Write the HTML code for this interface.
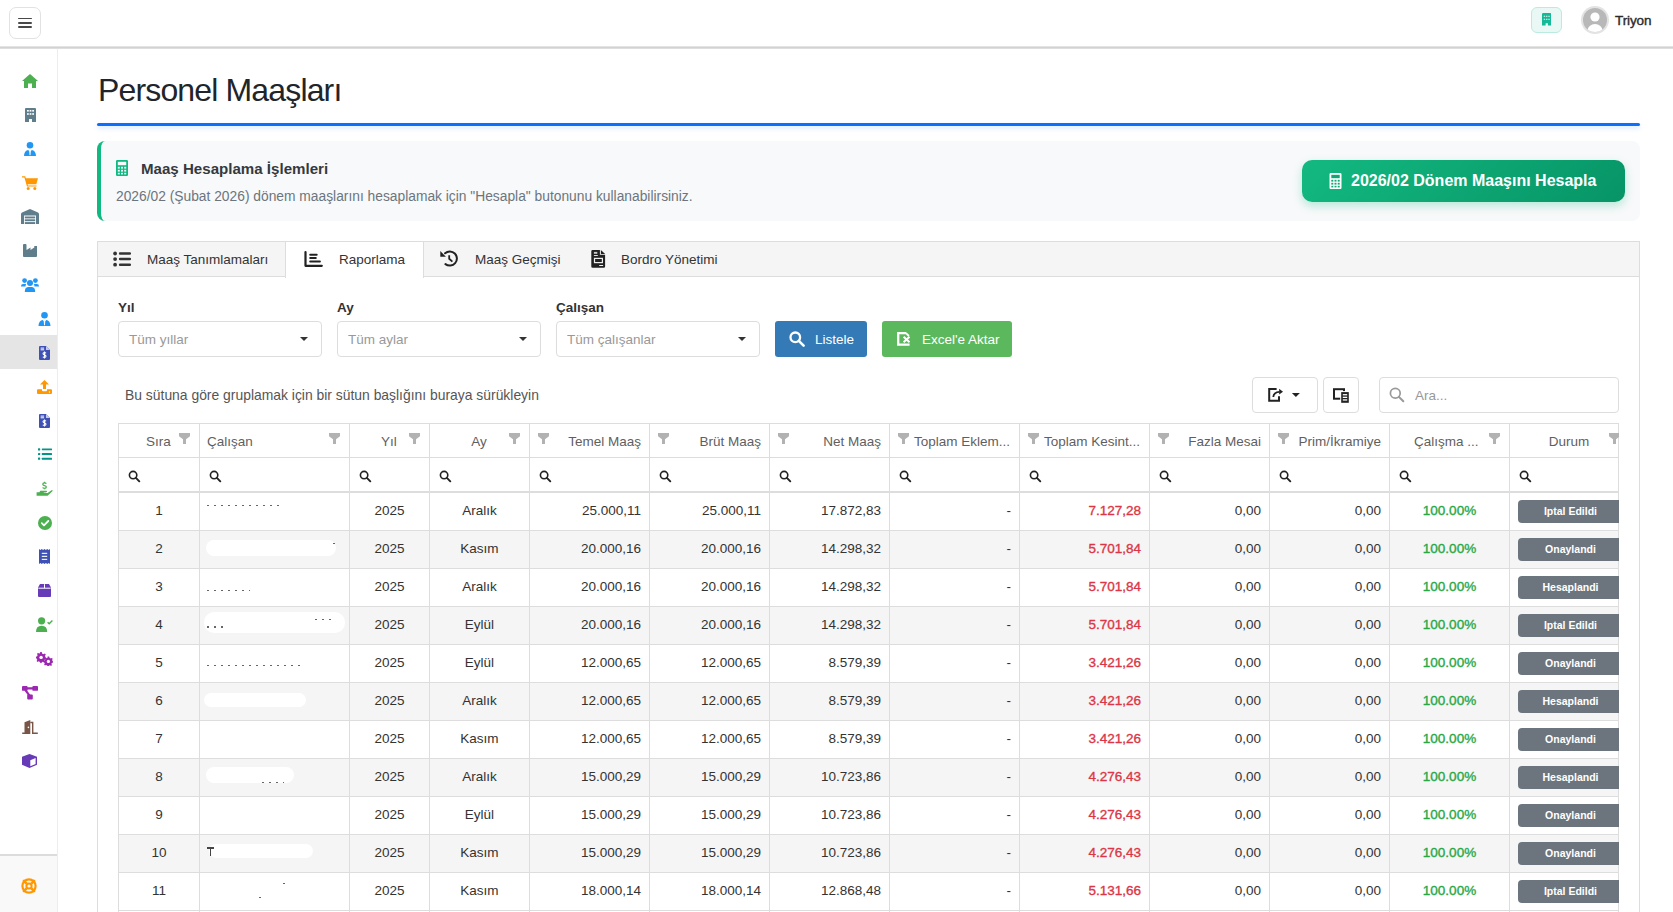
<!DOCTYPE html>
<html><head><meta charset="utf-8">
<style>
*{box-sizing:border-box;margin:0;padding:0}
html,body{width:1673px;height:912px;overflow:hidden;background:#fff;font-family:"Liberation Sans",sans-serif;color:#333}
svg{display:block}
.ab{position:absolute}
#nav{position:absolute;left:0;top:0;width:1673px;height:46px;background:#fff}
#navline{position:absolute;left:0;top:46px;width:1673px;height:3px;background:linear-gradient(#ececec,#cfcfcf 55%,#e8e8e8)}
#hamb{position:absolute;left:9px;top:7px;width:32px;height:32px;border:1px solid #e2e2e2;border-radius:7px;background:#fff}
#hamb i{position:absolute;left:8px;width:14.3px;height:1.7px;background:#484848;border-radius:1px}
#bldg{position:absolute;left:1531px;top:7px;width:31px;height:26px;border:1px solid #b9ecdf;border-radius:6px;background:#e9f8f4}
#avatar{position:absolute;left:1581px;top:6px;width:28px;height:28px;border-radius:50%;background:#e3e3e3}
#uname{position:absolute;left:1615px;top:12.5px;font-size:13.5px;font-weight:normal;color:#2b2b2b;-webkit-text-stroke:0.4px #2b2b2b;letter-spacing:-0.1px}
#side{position:absolute;left:0;top:49px;width:58px;height:863px;background:#fff;border-right:1px solid #ededed}
#sideact{position:absolute;left:0;top:335px;width:57px;height:34px;background:#e5e5e5}
#sidebot{position:absolute;left:0;top:854px;width:57px;height:58px;background:#f9f9f9;border-top:2px solid #dcdcdc}
.si{position:absolute}
#title{position:absolute;left:98px;top:72px;font-size:32px;color:#212529;white-space:nowrap;letter-spacing:-0.85px}
#bline{position:absolute;left:97px;top:123px;width:1543px;height:3px;background:#0d6efd;border-radius:2px;box-shadow:0 2px 5px rgba(13,110,253,.2)}
#card{position:absolute;left:97px;top:141px;width:1543px;height:80px;background:#f8f9fa;border-radius:8px;border-left:4px solid #10b981}
#card .lb{display:none}
#card .t{position:absolute;left:40px;top:19px;font-size:15.1px;font-weight:bold;color:#343a40;white-space:nowrap}
#card .s{position:absolute;left:15px;top:48px;font-size:13.8px;color:#6c757d;white-space:nowrap}
#gbtn{position:absolute;left:1302px;top:160px;width:323px;height:42px;border-radius:10px;background:linear-gradient(135deg,#13b981,#079466);color:#fff;box-shadow:0 4px 10px rgba(16,185,129,.28)}
#gbtn span{position:absolute;left:49px;top:12px;font-weight:bold;font-size:16px;white-space:nowrap}
#panel{position:absolute;left:97px;top:241px;width:1543px;height:680px;border:1px solid #ddd;background:#fff}
#tabs{position:absolute;left:0;top:0;width:1541px;height:35px;background:#f5f5f5;border-bottom:1px solid #ddd}
#acttab{position:absolute;left:187px;top:0;width:139px;height:36px;background:#fff;border-left:1px solid #ddd;border-right:1px solid #ddd}
.tt{position:absolute;top:252px;font-size:13.5px;color:#333;white-space:nowrap}
.lbl{position:absolute;top:300px;font-size:13.5px;font-weight:bold;color:#333}
.sel{position:absolute;top:321px;width:204px;height:36px;border:1px solid #ddd;border-radius:4px;background:#fff;font-size:13.5px;color:#999}
.sel span{position:absolute;left:10px;top:10px;white-space:nowrap}
.sel b{position:absolute;left:181px;top:15px;width:0;height:0;border-left:4px solid transparent;border-right:4px solid transparent;border-top:4px solid #333}
.btn{position:absolute;top:321px;height:36px;border-radius:3px;color:#fff;font-size:13.5px;white-space:nowrap}
.btn span{position:absolute;top:11px}
#grp{position:absolute;left:125px;top:387px;font-size:13.9px;color:#555;white-space:nowrap}
.tb{position:absolute;top:377px;height:36px;border:1px solid #ddd;border-radius:4px;background:#fff}
#search{position:absolute;left:1379px;top:377px;width:240px;height:36px;border:1px solid #ddd;border-radius:4px;background:#fff}
#search span{position:absolute;left:35px;top:10px;font-size:13.5px;color:#999}
#grid{position:absolute;left:118px;top:423px;width:1501px;height:489px;overflow:hidden;font-size:13.5px;color:#333}
#grid div{position:absolute}
.hl{left:0;width:1501px;height:1px;background:#ddd}
.vl{top:0;width:1px;height:489px;background:#ddd}
.dr{left:0;width:1501px;height:38px}
.hc{top:1px;height:33px}
.ht{top:10.5px;white-space:nowrap;color:#5f5f5f}
.fc{top:35px;height:33px}
.fc svg{position:absolute;left:9px;top:12px}
.dc{height:37px;line-height:35px;white-space:nowrap;overflow:hidden}
.ac{text-align:center}
.ar{text-align:right;padding-right:8px}
.red{color:#dc3545;-webkit-text-stroke:0.35px #dc3545}
.grn{color:#28a745;-webkit-text-stroke:0.35px #28a745}
.badge{position:absolute;left:8px;top:7px;width:105px;height:23px;border-radius:4px;background:#6c757d;color:#fff;font-weight:bold;font-size:10.5px;line-height:23px;text-align:center}
.fi{position:absolute}
</style></head><body>

<div id="nav">
  <div id="hamb"><i style="top:9.7px"></i><i style="top:14.2px"></i><i style="top:18.3px"></i></div>
  <div id="bldg"><svg class="ab" style="left:9.7px;top:5.3px" width="9.5" height="12.6" viewBox="0 0 9.5 12.6"><path d="M1.3 0H8.2A1.3 1.3 0 0 1 9.5 1.3V12.6H5.9V10.2H3.6V12.6H0V1.3A1.3 1.3 0 0 1 1.3 0Z" fill="#17b897"/><g fill="#e9f8f4"><rect x="1.7" y="2.7" width="1.5" height="1.1" rx=".4"/><rect x="4" y="2.7" width="1.5" height="1.1" rx=".4"/><rect x="6.3" y="2.7" width="1.5" height="1.1" rx=".4"/><rect x="1.7" y="5.7" width="1.5" height="1.1" rx=".4"/><rect x="4" y="5.7" width="1.5" height="1.1" rx=".4"/><rect x="6.3" y="5.7" width="1.5" height="1.1" rx=".4"/></g></svg></div>
  <div id="avatar"><svg class="ab" style="left:2px;top:2px" width="24" height="24" viewBox="0 0 24 24"><defs><clipPath id="avc"><circle cx="12" cy="12" r="12"/></clipPath></defs><circle cx="12" cy="12" r="12" fill="#b8b8b8"/><g clip-path="url(#avc)" fill="#fff"><circle cx="12" cy="9" r="4.6"/><ellipse cx="12" cy="22.5" rx="7.5" ry="6.5"/></g></svg></div>
  <div id="uname">Triyon</div>
</div>
<div id="navline"></div>
<div id="side">
  <div id="sideact" style="top:286px"></div>
  <div id="sidebot" style="top:805px"></div>
</div>
<!-- sidebar icons (absolute to page) -->
<svg class="si" style="left:22px;top:74px" width="16" height="14" viewBox="0 0 16 14"><path d="M8 0L16 7H14V14H10V9.5H6V14H2V7H0Z" fill="#4caf50"/></svg>
<svg class="si" style="left:25px;top:108px" width="11" height="14" viewBox="0 0 11 14"><path d="M1 0H10A1 1 0 0 1 11 1V14H7V11H4V14H0V1A1 1 0 0 1 1 0Z" fill="#607d8b"/><g fill="#fff"><rect x="2" y="2" width="1.8" height="1.6"/><rect x="4.6" y="2" width="1.8" height="1.6"/><rect x="7.2" y="2" width="1.8" height="1.6"/><rect x="2" y="5.2" width="1.8" height="1.6"/><rect x="4.6" y="5.2" width="1.8" height="1.6"/><rect x="7.2" y="5.2" width="1.8" height="1.6"/></g></svg>
<svg class="si" style="left:24px;top:142px" width="12" height="14" viewBox="0 0 12 14"><circle cx="6" cy="3.3" r="3.3" fill="#2196f3"/><path d="M0 14C0 10.5 1.8 8.3 4.3 8L6 10.5L7.7 8C10.2 8.3 12 10.5 12 14Z" fill="#2196f3"/><path d="M5.3 9.6H6.7L6.5 13.2H5.5Z" fill="#fff"/></svg>
<svg class="si" style="left:22px;top:176px" width="16" height="14" viewBox="0 0 16 14"><path d="M0 0.3H3.2L3.9 2.2H16L14.3 8.2H5.6L6 9.4H14.5V10.6H5L2.4 1.6H0Z" fill="#ff9800"/><circle cx="6.2" cy="12.5" r="1.5" fill="#ff9800"/><circle cx="12.8" cy="12.5" r="1.5" fill="#ff9800"/><path d="M5 3.6H14.3L13.4 6.8H5.9Z" fill="#fff" opacity="0"/></svg>
<svg class="si" style="left:21px;top:209px" width="18" height="15" viewBox="0 0 18 15"><path d="M0 5Q0 4 1 3.5L9 0L17 3.5Q18 4 18 5V15H15V6.5H3V15H0Z" fill="#607d8b"/><rect x="3.8" y="7.5" width="10.4" height="1.9" fill="#607d8b"/><rect x="3.8" y="10.3" width="10.4" height="1.9" fill="#607d8b"/><rect x="3.8" y="13.1" width="10.4" height="1.9" fill="#607d8b"/></svg>
<svg class="si" style="left:23px;top:244px" width="14" height="13" viewBox="0 0 14 13"><path d="M0 1A1 1 0 0 1 1 0H2.5A1 1 0 0 1 3.5 1V6L7.5 3.5V6L11.3 3.5V2H14V12A1 1 0 0 1 13 13H1A1 1 0 0 1 0 12Z" fill="#607d8b"/></svg>
<svg class="si" style="left:21px;top:278px" width="18" height="14" viewBox="0 0 18 14"><circle cx="3.6" cy="2.6" r="2.4" fill="#2196f3"/><circle cx="14.4" cy="2.6" r="2.4" fill="#2196f3"/><circle cx="9" cy="5" r="3" fill="#2196f3"/><path d="M0 8.2Q0 6 2.2 6H5.2Q4.5 7 4.5 8.6H0Z" fill="#2196f3"/><path d="M18 8.2Q18 6 15.8 6H12.8Q13.5 7 13.5 8.6H18Z" fill="#2196f3"/><path d="M3.8 14Q3.8 9.2 7 9H11Q14.2 9.2 14.2 14Z" fill="#2196f3"/></svg>
<svg class="si" style="left:38px;top:312px" width="13" height="14" viewBox="0 0 12 14"><circle cx="6" cy="3.3" r="3.3" fill="#2196f3"/><path d="M0 14C0 10.5 1.8 8.3 4.3 8L6 10.5L7.7 8C10.2 8.3 12 10.5 12 14Z" fill="#2196f3"/><path d="M5.3 9.6H6.7L6.5 13.2H5.5Z" fill="#fff"/></svg>
<svg class="si" style="left:39px;top:346px" width="11" height="14" viewBox="0 0 11 14"><path d="M1 0H7L11 4V13A1 1 0 0 1 10 14H1A1 1 0 0 1 0 13V1A1 1 0 0 1 1 0Z" fill="#3f51b5"/><path d="M7 0V4H11Z" fill="#c5cae9"/><rect x="1.6" y="1.6" width="3.5" height="1" fill="#fff"/><rect x="1.6" y="3.3" width="3.5" height="1" fill="#fff"/><path d="M5.5 5.6V12.6M7 7.2Q6.6 6.5 5.5 6.5Q4 6.5 4 7.6Q4 8.6 5.5 8.9Q7 9.2 7 10.3Q7 11.5 5.5 11.5Q4.3 11.5 3.9 10.7" stroke="#fff" stroke-width="1.1" fill="none"/></svg>
<svg class="si" style="left:37px;top:380px" width="15" height="14" viewBox="0 0 15 14"><path d="M7.5 0L12 4.6H9V9H6V4.6H3Z" fill="#ff9800"/><path d="M0 10.2A1 1 0 0 1 1 9.2H5V10.2A1 1 0 0 0 6 11.2H9A1 1 0 0 0 10 10.2V9.2H14A1 1 0 0 1 15 10.2V13A1 1 0 0 1 14 14H1A1 1 0 0 1 0 13Z" fill="#ff9800"/><circle cx="12.5" cy="12" r="0.7" fill="#fff"/></svg>
<svg class="si" style="left:39px;top:414px" width="11" height="14" viewBox="0 0 11 14"><path d="M1 0H7L11 4V13A1 1 0 0 1 10 14H1A1 1 0 0 1 0 13V1A1 1 0 0 1 1 0Z" fill="#3f51b5"/><path d="M7 0V4H11Z" fill="#c5cae9"/><rect x="1.6" y="1.6" width="3.5" height="1" fill="#fff"/><rect x="1.6" y="3.3" width="3.5" height="1" fill="#fff"/><path d="M5.5 5.6V12.6M7 7.2Q6.6 6.5 5.5 6.5Q4 6.5 4 7.6Q4 8.6 5.5 8.9Q7 9.2 7 10.3Q7 11.5 5.5 11.5Q4.3 11.5 3.9 10.7" stroke="#fff" stroke-width="1.1" fill="none"/></svg>
<svg class="si" style="left:38px;top:448px" width="14" height="12" viewBox="0 0 14 12"><g fill="#009688"><rect x="0" y="0.2" width="2.2" height="2.2" rx="0.5"/><rect x="0" y="4.9" width="2.2" height="2.2" rx="0.5"/><rect x="0" y="9.6" width="2.2" height="2.2" rx="0.5"/><rect x="3.8" y="0.4" width="10.2" height="1.9" rx="0.5"/><rect x="3.8" y="5.1" width="10.2" height="1.9" rx="0.5"/><rect x="3.8" y="9.8" width="10.2" height="1.9" rx="0.5"/></g></svg>
<svg class="si" style="left:32px;top:478px" width="26" height="22" viewBox="0 0 26 22"><path d="M14.4 5.6Q13.8 4.9 12.5 4.9Q10.8 4.9 10.8 6.3Q10.8 7.3 12.5 7.6Q14.3 7.9 14.3 9.1Q14.3 10.3 12.5 10.3Q11.1 10.3 10.6 9.5M12.5 3.8V4.9M12.5 10.3V11.2" stroke="#4caf50" stroke-width="1.3" fill="none"/><path d="M4.6 14.2H7.4L8.3 12.7H14.3Q15.3 12.8 15 13.7Q14.6 14.5 13.2 14.5H11.6L11.9 15.1H15.6L19.5 12.2Q20.6 11.9 20.9 12.8L15.6 17.8H4.6Z" fill="#4caf50"/></svg>
<svg class="si" style="left:38px;top:516px" width="14" height="14" viewBox="0 0 14 14"><circle cx="7" cy="7" r="7" fill="#4caf50"/><path d="M3.8 7.2L6 9.3L10.3 5" stroke="#fff" stroke-width="1.8" fill="none" stroke-linecap="round" stroke-linejoin="round"/></svg>
<svg class="si" style="left:39px;top:549px" width="11" height="15" viewBox="0 0 11 15"><path d="M0 0L1.4 0.9L2.75 0L4.1 0.9L5.5 0L6.9 0.9L8.25 0L9.6 0.9L11 0V15L9.6 14.1L8.25 15L6.9 14.1L5.5 15L4.1 14.1L2.75 15L1.4 14.1L0 15Z" fill="#3f51b5"/><rect x="2.8" y="3.8" width="5.4" height="1.1" fill="#fff"/><rect x="2.8" y="6.8" width="5.4" height="1.1" fill="#fff"/><rect x="2.8" y="9.8" width="5.4" height="1.1" fill="#fff"/></svg>
<svg class="si" style="left:38px;top:584px" width="13" height="13" viewBox="0 0 13 13"><path d="M2 0H11L13 3.6V12A1 1 0 0 1 12 13H1A1 1 0 0 1 0 12V3.6Z" fill="#673ab7"/><path d="M0.3 4.2H12.7M6.5 0.2V4.2" stroke="#fff" stroke-width="1"/></svg>
<svg class="si" style="left:36px;top:617px" width="17" height="15" viewBox="0 0 17 15"><circle cx="5.6" cy="3.8" r="3.6" fill="#4caf50"/><path d="M0 15Q0 8.8 5.6 8.8Q11.2 8.8 11.2 15Z" fill="#4caf50"/><path d="M11.6 5.2L13.2 6.8L16.4 3.6" stroke="#4caf50" stroke-width="1.4" fill="none"/></svg>
<svg class="si" style="left:36px;top:652px" width="17" height="14" viewBox="0 0 17 14"><g fill="#9c27b0"><circle cx="5" cy="5" r="3.2"/><path d="M4.2 0H5.8L6 1.4L7.6 2.2L8.8 1.5L9.8 2.5L9 3.7L9.6 5.5L10.2 5.8V7L9 7.3L8.5 8.4L9.1 9.6L8 10.5L6.9 9.8L5.8 10.2L5.5 11H4.3L4 9.9L2.6 9.3L1.6 10L0.6 9L1.3 8L0.6 6.6L0 6.3V4.8L1.2 4.3L1.6 2.9L1 1.8L2 1L3.2 1.6L4 1.2Z"/><circle cx="12.4" cy="9.2" r="3"/><path d="M11.6 4.6H13.2L13.5 5.8L14.8 6.5L15.8 5.9L16.7 6.8L16.1 7.9L16.6 9L17 9.4V10.6L15.9 10.9L15.4 12L16 13L15 13.9L14 13.3L12.9 13.7L12.6 14.5H11.4L11.2 13.5L10 13L9 13.6L8.1 12.7L8.7 11.7L8.2 10.6L7.8 10.3V9L8.9 8.6L9.3 7.6L8.8 6.6L9.7 5.8L10.7 6.3L11.4 5.9Z"/></g><circle cx="5.1" cy="5.4" r="1.7" fill="#fff"/><circle cx="12.4" cy="9.4" r="1.6" fill="#fff"/></svg>
<svg class="si" style="left:22px;top:686px" width="16" height="14" viewBox="0 0 16 14"><path d="M4 2.4H12M3.2 3.8L7.6 9.6" stroke="#9c27b0" stroke-width="2.2" fill="none"/><g fill="#9c27b0"><rect x="0" y="0" width="5.6" height="4.8" rx="0.9"/><rect x="10.4" y="0" width="5.6" height="4.8" rx="0.9"/><rect x="5.2" y="8.6" width="5.6" height="4.8" rx="0.9"/></g></svg>
<svg class="si" style="left:22px;top:720px" width="16" height="14" viewBox="0 0 16 14"><path d="M2.5 12.5V2.2L8.3 0V14H0.2V12.5Z" fill="#795548"/><path d="M8.3 1.8H11.4V12.6H15.8V14H10V3.2H8.3Z" fill="#795548"/><circle cx="6.4" cy="7.4" r="0.8" fill="#fff"/></svg>
<svg class="si" style="left:22px;top:754px" width="15" height="14" viewBox="0 0 15 14"><path d="M7.5 0L15 2.8V10.8L7.5 14L0 10.8V2.8Z" fill="#673ab7"/><path d="M8.3 6.2L13.6 4V10L8.3 12.3Z" fill="#fff"/></svg>
<svg class="si" style="left:21px;top:878px" width="16" height="16" viewBox="0 0 16 16"><circle cx="8" cy="8" r="6.6" fill="none" stroke="#ff9800" stroke-width="2.2"/><circle cx="8" cy="8" r="2.6" fill="none" stroke="#ff9800" stroke-width="2"/><path d="M2.2 2.2L5.6 5.6M13.8 2.2L10.4 5.6M2.2 13.8L5.6 10.4M13.8 13.8L10.4 10.4" stroke="#ff9800" stroke-width="2.6"/></svg>

<div id="title">Personel Maaşları</div>
<div id="bline"></div>
<div id="card">
  <div class="lb"></div>
  <svg class="ab" style="left:15px;top:19px" width="12" height="16" viewBox="0 0 12 16"><path d="M1.2 0H10.8A1.2 1.2 0 0 1 12 1.2V14.8A1.2 1.2 0 0 1 10.8 16H1.2A1.2 1.2 0 0 1 0 14.8V1.2A1.2 1.2 0 0 1 1.2 0Z" fill="#10b981"/><g fill="#f8f9fa"><rect x="1.8" y="1.8" width="8.4" height="3.4"/><rect x="1.8" y="6.8" width="2" height="1.8"/><rect x="5" y="6.8" width="2" height="1.8"/><rect x="8.2" y="6.8" width="2" height="1.8"/><rect x="1.8" y="9.8" width="2" height="1.8"/><rect x="5" y="9.8" width="2" height="1.8"/><rect x="8.2" y="9.8" width="2" height="1.8"/><rect x="1.8" y="12.8" width="2" height="1.6"/><rect x="5" y="12.8" width="2" height="1.6"/><rect x="8.2" y="12.8" width="2" height="1.6"/></g></svg>
  <div class="t">Maaş Hesaplama İşlemleri</div>
  <div class="s">2026/02 (Şubat 2026) dönem maaşlarını hesaplamak için "Hesapla" butonunu kullanabilirsiniz.</div>
</div>
<div id="gbtn">
  <svg class="ab" style="left:27px;top:13px" width="13" height="16" viewBox="0 0 12 16"><path d="M1.2 0H10.8A1.2 1.2 0 0 1 12 1.2V14.8A1.2 1.2 0 0 1 10.8 16H1.2A1.2 1.2 0 0 1 0 14.8V1.2A1.2 1.2 0 0 1 1.2 0Z" fill="#fff"/><g fill="#10a676"><rect x="1.8" y="1.8" width="8.4" height="3.4"/><rect x="1.8" y="6.8" width="2" height="1.8"/><rect x="5" y="6.8" width="2" height="1.8"/><rect x="8.2" y="6.8" width="2" height="1.8"/><rect x="1.8" y="9.8" width="2" height="1.8"/><rect x="5" y="9.8" width="2" height="1.8"/><rect x="8.2" y="9.8" width="2" height="1.8"/><rect x="1.8" y="12.8" width="2" height="1.6"/><rect x="5" y="12.8" width="2" height="1.6"/><rect x="8.2" y="12.8" width="2" height="1.6"/></g></svg>
  <span>2026/02 Dönem Maaşını Hesapla</span>
</div>
<div id="panel">
  <div id="tabs"></div>
  <div id="acttab"></div>
</div>
<!-- tabs content -->
<svg class="ab" style="left:106px;top:244px" width="30" height="30" viewBox="0 0 30 30"><g fill="#333"><circle cx="9.1" cy="9.5" r="1.9"/><circle cx="9.1" cy="15.1" r="1.9"/><circle cx="9.1" cy="20.7" r="1.9"/></g><path d="M14.1 9.5H23.8M14.1 15.1H23.8M14.1 20.7H23.8" stroke="#333" stroke-width="2.5" stroke-linecap="round"/></svg>
<div class="tt" style="left:147px">Maaş Tanımlamaları</div>
<svg class="ab" style="left:298px;top:244px" width="32" height="30" viewBox="0 0 32 30"><path d="M7.5 8V21.8H23.8" stroke="#222" stroke-width="2.2" fill="none" stroke-linecap="round" stroke-linejoin="round"/><path d="M12.2 10.7H18.7M12.2 14H17.8M12.2 17.4H21.9" stroke="#222" stroke-width="2" stroke-linecap="round"/></svg>
<div class="tt" style="left:339px">Raporlama</div>
<svg class="ab" style="left:436px;top:244px" width="30" height="30" viewBox="0 0 30 30"><path d="M9.07 9.21A7.1 7.1 0 1 1 9.46 20.12" stroke="#222" stroke-width="2" fill="none" stroke-linecap="round"/><path d="M4.3 6.9V12.8H9.9Z" fill="#222"/><path d="M13.2 11.2V14.8L16.4 17.6" stroke="#222" stroke-width="1.8" fill="none"/></svg>
<div class="tt" style="left:475px">Maaş Geçmişi</div>
<svg class="ab" style="left:586px;top:244px" width="30" height="30" viewBox="0 0 30 30"><path d="M6.6 5.9H13.9V10.8H19.1V22.5A1.3 1.3 0 0 1 17.8 23.8H6.6A1.3 1.3 0 0 1 5.3 22.5V7.2A1.3 1.3 0 0 1 6.6 5.9Z" fill="#222"/><path d="M14.9 6.1L19.1 10H14.9Z" fill="#222"/><g fill="#f5f5f5"><rect x="7.9" y="7.9" width="3.4" height="1.9" opacity=".8"/><rect x="7.9" y="11" width="3.9" height="0.9"/><rect x="7.9" y="21" width="0" height="0"/><rect x="13.2" y="21" width="3.9" height="1"/></g><rect x="8.5" y="14.4" width="7.9" height="4.2" fill="none" stroke="#eee" stroke-width="1.2"/></svg>
<div class="tt" style="left:621px">Bordro Yönetimi</div>

<div class="lbl" style="left:118px">Yıl</div>
<div class="lbl" style="left:337px">Ay</div>
<div class="lbl" style="left:556px">Çalışan</div>
<div class="sel" style="left:118px"><span>Tüm yıllar</span><b></b></div>
<div class="sel" style="left:337px"><span>Tüm aylar</span><b></b></div>
<div class="sel" style="left:556px"><span>Tüm çalışanlar</span><b></b></div>
<div class="btn" style="left:775px;width:92px;background:#337ab7">
  <svg class="ab" style="left:14px;top:10px" width="16" height="16" viewBox="0 0 16 16"><circle cx="6.3" cy="6.3" r="4.8" stroke="#fff" stroke-width="2.3" fill="none"/><path d="M9.8 9.8L14.6 14.6" stroke="#fff" stroke-width="2.6" stroke-linecap="round"/></svg>
  <span style="left:40px">Listele</span>
</div>
<div class="btn" style="left:882px;width:130px;background:#5cb85c">
  <svg class="ab" style="left:15px;top:11px" width="15" height="14" viewBox="0 0 15 14"><path d="M9.3 1.2H1.2V12.7H12.6" stroke="#fff" stroke-width="2.3" fill="none"/><path d="M9 1.1L11.9 4" stroke="#fff" stroke-width="1.9"/><path d="M6.6 4.8L12.5 10.3M12.5 4.8L6.6 10.3" stroke="#fff" stroke-width="2"/></svg>
  <span style="left:40px">Excel'e Aktar</span>
</div>
<div id="grp">Bu sütuna göre gruplamak için bir sütun başlığını buraya sürükleyin</div>
<div class="tb" style="left:1252px;width:66px">
  <svg class="ab" style="left:9px;top:4px" width="40" height="26" viewBox="0 0 40 26"><path d="M14.6 6.9H7.2V18.7H17V14.3" stroke="#222" stroke-width="2" fill="none"/><path d="M11.3 15Q11.6 10 17.6 9.8" stroke="#222" stroke-width="1.8" fill="none"/><path d="M17.2 6.8L21 9.7L17.2 12.6Z" fill="#222"/><path d="M29.9 11H37.9L33.9 15Z" fill="#222"/></svg>
</div>
<div class="tb" style="left:1323px;width:36px">
  <svg class="ab" style="left:-1px;top:-1px" width="36" height="36" viewBox="0 0 36 36"><rect x="11" y="12.2" width="10" height="9.5" fill="none" stroke="#222" stroke-width="2"/><rect x="17.2" y="14.1" width="9.6" height="12.7" fill="#fff"/><rect x="18.2" y="15.1" width="7.6" height="10.7" fill="#222"/><g fill="#fff"><rect x="19.8" y="17.1" width="4.4" height="1.3"/><rect x="19.8" y="19.7" width="4.4" height="1.3"/><rect x="19.8" y="22.3" width="4.4" height="1.3"/></g></svg>
</div>
<div id="search">
  <svg class="ab" style="left:9px;top:9px" width="16" height="16" viewBox="0 0 16 16"><circle cx="6.3" cy="6.3" r="4.9" stroke="#999" stroke-width="1.7" fill="none"/><path d="M9.9 9.9L14.3 14.3" stroke="#999" stroke-width="2" stroke-linecap="round"/></svg>
  <span>Ara...</span>
</div>

<div id="grid">
<div class="dr" style="top:107px;background:#f5f5f5"></div>
<div class="dr" style="top:183px;background:#f5f5f5"></div>
<div class="dr" style="top:259px;background:#f5f5f5"></div>
<div class="dr" style="top:335px;background:#f5f5f5"></div>
<div class="dr" style="top:411px;background:#f5f5f5"></div>
<div class="hl" style="top:0"></div>
<div class="hl" style="top:34px"></div>
<div class="hl" style="top:68px;height:2px"></div>
<div class="hl" style="top:107px"></div>
<div class="hl" style="top:145px"></div>
<div class="hl" style="top:183px"></div>
<div class="hl" style="top:221px"></div>
<div class="hl" style="top:259px"></div>
<div class="hl" style="top:297px"></div>
<div class="hl" style="top:335px"></div>
<div class="hl" style="top:373px"></div>
<div class="hl" style="top:411px"></div>
<div class="hl" style="top:449px"></div>
<div class="hl" style="top:487px"></div>
<div class="vl" style="left:0px"></div>
<div class="vl" style="left:81px"></div>
<div class="vl" style="left:231px"></div>
<div class="vl" style="left:311px"></div>
<div class="vl" style="left:411px"></div>
<div class="vl" style="left:531px"></div>
<div class="vl" style="left:651px"></div>
<div class="vl" style="left:771px"></div>
<div class="vl" style="left:901px"></div>
<div class="vl" style="left:1031px"></div>
<div class="vl" style="left:1151px"></div>
<div class="vl" style="left:1271px"></div>
<div class="vl" style="left:1391px"></div>
<div class="vl" style="left:1500px"></div>
<div style="left:61px;top:10px;width:11px;height:11px"><svg width="11" height="11" viewBox="0 0 11 11"><path d="M0 0H11V3.2L7 6.2V11H4V6.2L0 3.2Z" fill="#b2b2b2"/></svg></div>
<div class="ht" style="left:-59.5px;width:200px;text-align:center">Sıra</div>
<div class="fc" style="left:1px;width:80px"><svg class="mg" width="13" height="13" viewBox="0 0 13 13"><circle cx="5.1" cy="5.1" r="3.7" fill="none" stroke="#222" stroke-width="1.6"/><path d="M7.9 7.9L11.3 11.3" stroke="#222" stroke-width="1.9" stroke-linecap="round"/></svg></div>
<div style="left:211px;top:10px;width:11px;height:11px"><svg width="11" height="11" viewBox="0 0 11 11"><path d="M0 0H11V3.2L7 6.2V11H4V6.2L0 3.2Z" fill="#b2b2b2"/></svg></div>
<div class="ht" style="left:89px">Çalışan</div>
<div class="fc" style="left:82px;width:149px"><svg class="mg" width="13" height="13" viewBox="0 0 13 13"><circle cx="5.1" cy="5.1" r="3.7" fill="none" stroke="#222" stroke-width="1.6"/><path d="M7.9 7.9L11.3 11.3" stroke="#222" stroke-width="1.9" stroke-linecap="round"/></svg></div>
<div style="left:291px;top:10px;width:11px;height:11px"><svg width="11" height="11" viewBox="0 0 11 11"><path d="M0 0H11V3.2L7 6.2V11H4V6.2L0 3.2Z" fill="#b2b2b2"/></svg></div>
<div class="ht" style="left:171.0px;width:200px;text-align:center">Yıl</div>
<div class="fc" style="left:232px;width:79px"><svg class="mg" width="13" height="13" viewBox="0 0 13 13"><circle cx="5.1" cy="5.1" r="3.7" fill="none" stroke="#222" stroke-width="1.6"/><path d="M7.9 7.9L11.3 11.3" stroke="#222" stroke-width="1.9" stroke-linecap="round"/></svg></div>
<div style="left:391px;top:10px;width:11px;height:11px"><svg width="11" height="11" viewBox="0 0 11 11"><path d="M0 0H11V3.2L7 6.2V11H4V6.2L0 3.2Z" fill="#b2b2b2"/></svg></div>
<div class="ht" style="left:261.0px;width:200px;text-align:center">Ay</div>
<div class="fc" style="left:312px;width:99px"><svg class="mg" width="13" height="13" viewBox="0 0 13 13"><circle cx="5.1" cy="5.1" r="3.7" fill="none" stroke="#222" stroke-width="1.6"/><path d="M7.9 7.9L11.3 11.3" stroke="#222" stroke-width="1.9" stroke-linecap="round"/></svg></div>
<div style="left:420px;top:10px;width:11px;height:11px"><svg width="11" height="11" viewBox="0 0 11 11"><path d="M0 0H11V3.2L7 6.2V11H4V6.2L0 3.2Z" fill="#b2b2b2"/></svg></div>
<div class="ht" style="left:323px;width:200px;text-align:right">Temel Maaş</div>
<div class="fc" style="left:412px;width:119px"><svg class="mg" width="13" height="13" viewBox="0 0 13 13"><circle cx="5.1" cy="5.1" r="3.7" fill="none" stroke="#222" stroke-width="1.6"/><path d="M7.9 7.9L11.3 11.3" stroke="#222" stroke-width="1.9" stroke-linecap="round"/></svg></div>
<div style="left:540px;top:10px;width:11px;height:11px"><svg width="11" height="11" viewBox="0 0 11 11"><path d="M0 0H11V3.2L7 6.2V11H4V6.2L0 3.2Z" fill="#b2b2b2"/></svg></div>
<div class="ht" style="left:443px;width:200px;text-align:right">Brüt Maaş</div>
<div class="fc" style="left:532px;width:119px"><svg class="mg" width="13" height="13" viewBox="0 0 13 13"><circle cx="5.1" cy="5.1" r="3.7" fill="none" stroke="#222" stroke-width="1.6"/><path d="M7.9 7.9L11.3 11.3" stroke="#222" stroke-width="1.9" stroke-linecap="round"/></svg></div>
<div style="left:660px;top:10px;width:11px;height:11px"><svg width="11" height="11" viewBox="0 0 11 11"><path d="M0 0H11V3.2L7 6.2V11H4V6.2L0 3.2Z" fill="#b2b2b2"/></svg></div>
<div class="ht" style="left:563px;width:200px;text-align:right">Net Maaş</div>
<div class="fc" style="left:652px;width:119px"><svg class="mg" width="13" height="13" viewBox="0 0 13 13"><circle cx="5.1" cy="5.1" r="3.7" fill="none" stroke="#222" stroke-width="1.6"/><path d="M7.9 7.9L11.3 11.3" stroke="#222" stroke-width="1.9" stroke-linecap="round"/></svg></div>
<div style="left:780px;top:10px;width:11px;height:11px"><svg width="11" height="11" viewBox="0 0 11 11"><path d="M0 0H11V3.2L7 6.2V11H4V6.2L0 3.2Z" fill="#b2b2b2"/></svg></div>
<div class="ht" style="left:796px">Toplam Eklem...</div>
<div class="fc" style="left:772px;width:129px"><svg class="mg" width="13" height="13" viewBox="0 0 13 13"><circle cx="5.1" cy="5.1" r="3.7" fill="none" stroke="#222" stroke-width="1.6"/><path d="M7.9 7.9L11.3 11.3" stroke="#222" stroke-width="1.9" stroke-linecap="round"/></svg></div>
<div style="left:910px;top:10px;width:11px;height:11px"><svg width="11" height="11" viewBox="0 0 11 11"><path d="M0 0H11V3.2L7 6.2V11H4V6.2L0 3.2Z" fill="#b2b2b2"/></svg></div>
<div class="ht" style="left:926px">Toplam Kesint...</div>
<div class="fc" style="left:902px;width:129px"><svg class="mg" width="13" height="13" viewBox="0 0 13 13"><circle cx="5.1" cy="5.1" r="3.7" fill="none" stroke="#222" stroke-width="1.6"/><path d="M7.9 7.9L11.3 11.3" stroke="#222" stroke-width="1.9" stroke-linecap="round"/></svg></div>
<div style="left:1040px;top:10px;width:11px;height:11px"><svg width="11" height="11" viewBox="0 0 11 11"><path d="M0 0H11V3.2L7 6.2V11H4V6.2L0 3.2Z" fill="#b2b2b2"/></svg></div>
<div class="ht" style="left:943px;width:200px;text-align:right">Fazla Mesai</div>
<div class="fc" style="left:1032px;width:119px"><svg class="mg" width="13" height="13" viewBox="0 0 13 13"><circle cx="5.1" cy="5.1" r="3.7" fill="none" stroke="#222" stroke-width="1.6"/><path d="M7.9 7.9L11.3 11.3" stroke="#222" stroke-width="1.9" stroke-linecap="round"/></svg></div>
<div style="left:1160px;top:10px;width:11px;height:11px"><svg width="11" height="11" viewBox="0 0 11 11"><path d="M0 0H11V3.2L7 6.2V11H4V6.2L0 3.2Z" fill="#b2b2b2"/></svg></div>
<div class="ht" style="left:1063px;width:200px;text-align:right">Prim/İkramiye</div>
<div class="fc" style="left:1152px;width:119px"><svg class="mg" width="13" height="13" viewBox="0 0 13 13"><circle cx="5.1" cy="5.1" r="3.7" fill="none" stroke="#222" stroke-width="1.6"/><path d="M7.9 7.9L11.3 11.3" stroke="#222" stroke-width="1.9" stroke-linecap="round"/></svg></div>
<div style="left:1371px;top:10px;width:11px;height:11px"><svg width="11" height="11" viewBox="0 0 11 11"><path d="M0 0H11V3.2L7 6.2V11H4V6.2L0 3.2Z" fill="#b2b2b2"/></svg></div>
<div class="ht" style="left:1296px">Çalışma ...</div>
<div class="fc" style="left:1272px;width:119px"><svg class="mg" width="13" height="13" viewBox="0 0 13 13"><circle cx="5.1" cy="5.1" r="3.7" fill="none" stroke="#222" stroke-width="1.6"/><path d="M7.9 7.9L11.3 11.3" stroke="#222" stroke-width="1.9" stroke-linecap="round"/></svg></div>
<div style="left:1491px;top:10px;width:11px;height:11px"><svg width="11" height="11" viewBox="0 0 11 11"><path d="M0 0H11V3.2L7 6.2V11H4V6.2L0 3.2Z" fill="#b2b2b2"/></svg></div>
<div class="ht" style="left:1351.0px;width:200px;text-align:center">Durum</div>
<div class="fc" style="left:1392px;width:119px"><svg class="mg" width="13" height="13" viewBox="0 0 13 13"><circle cx="5.1" cy="5.1" r="3.7" fill="none" stroke="#222" stroke-width="1.6"/><path d="M7.9 7.9L11.3 11.3" stroke="#222" stroke-width="1.9" stroke-linecap="round"/></svg></div>
<div class="dc ac " style="left:1px;width:80px;top:70px">1</div>
<div class="dc ac " style="left:232px;width:79px;top:70px">2025</div>
<div class="dc ac " style="left:312px;width:99px;top:70px">Aralık</div>
<div class="dc ar " style="left:412px;width:119px;top:70px">25.000,11</div>
<div class="dc ar " style="left:532px;width:119px;top:70px">25.000,11</div>
<div class="dc ar " style="left:652px;width:119px;top:70px">17.872,83</div>
<div class="dc ar " style="left:772px;width:129px;top:70px">-</div>
<div class="dc ar red" style="left:902px;width:129px;top:70px">7.127,28</div>
<div class="dc ar " style="left:1032px;width:119px;top:70px">0,00</div>
<div class="dc ar " style="left:1152px;width:119px;top:70px">0,00</div>
<div class="dc ac grn" style="left:1272px;width:119px;top:70px">100.00%</div>
<div class="dc" style="left:1392px;width:130px;top:70px"><span class="badge">Iptal Edildi</span></div>
<div class="dc ac " style="left:1px;width:80px;top:108px">2</div>
<div class="dc ac " style="left:232px;width:79px;top:108px">2025</div>
<div class="dc ac " style="left:312px;width:99px;top:108px">Kasım</div>
<div class="dc ar " style="left:412px;width:119px;top:108px">20.000,16</div>
<div class="dc ar " style="left:532px;width:119px;top:108px">20.000,16</div>
<div class="dc ar " style="left:652px;width:119px;top:108px">14.298,32</div>
<div class="dc ar " style="left:772px;width:129px;top:108px">-</div>
<div class="dc ar red" style="left:902px;width:129px;top:108px">5.701,84</div>
<div class="dc ar " style="left:1032px;width:119px;top:108px">0,00</div>
<div class="dc ar " style="left:1152px;width:119px;top:108px">0,00</div>
<div class="dc ac grn" style="left:1272px;width:119px;top:108px">100.00%</div>
<div class="dc" style="left:1392px;width:130px;top:108px"><span class="badge">Onaylandi</span></div>
<div class="dc ac " style="left:1px;width:80px;top:146px">3</div>
<div class="dc ac " style="left:232px;width:79px;top:146px">2025</div>
<div class="dc ac " style="left:312px;width:99px;top:146px">Aralık</div>
<div class="dc ar " style="left:412px;width:119px;top:146px">20.000,16</div>
<div class="dc ar " style="left:532px;width:119px;top:146px">20.000,16</div>
<div class="dc ar " style="left:652px;width:119px;top:146px">14.298,32</div>
<div class="dc ar " style="left:772px;width:129px;top:146px">-</div>
<div class="dc ar red" style="left:902px;width:129px;top:146px">5.701,84</div>
<div class="dc ar " style="left:1032px;width:119px;top:146px">0,00</div>
<div class="dc ar " style="left:1152px;width:119px;top:146px">0,00</div>
<div class="dc ac grn" style="left:1272px;width:119px;top:146px">100.00%</div>
<div class="dc" style="left:1392px;width:130px;top:146px"><span class="badge">Hesaplandi</span></div>
<div class="dc ac " style="left:1px;width:80px;top:184px">4</div>
<div class="dc ac " style="left:232px;width:79px;top:184px">2025</div>
<div class="dc ac " style="left:312px;width:99px;top:184px">Eylül</div>
<div class="dc ar " style="left:412px;width:119px;top:184px">20.000,16</div>
<div class="dc ar " style="left:532px;width:119px;top:184px">20.000,16</div>
<div class="dc ar " style="left:652px;width:119px;top:184px">14.298,32</div>
<div class="dc ar " style="left:772px;width:129px;top:184px">-</div>
<div class="dc ar red" style="left:902px;width:129px;top:184px">5.701,84</div>
<div class="dc ar " style="left:1032px;width:119px;top:184px">0,00</div>
<div class="dc ar " style="left:1152px;width:119px;top:184px">0,00</div>
<div class="dc ac grn" style="left:1272px;width:119px;top:184px">100.00%</div>
<div class="dc" style="left:1392px;width:130px;top:184px"><span class="badge">Iptal Edildi</span></div>
<div class="dc ac " style="left:1px;width:80px;top:222px">5</div>
<div class="dc ac " style="left:232px;width:79px;top:222px">2025</div>
<div class="dc ac " style="left:312px;width:99px;top:222px">Eylül</div>
<div class="dc ar " style="left:412px;width:119px;top:222px">12.000,65</div>
<div class="dc ar " style="left:532px;width:119px;top:222px">12.000,65</div>
<div class="dc ar " style="left:652px;width:119px;top:222px">8.579,39</div>
<div class="dc ar " style="left:772px;width:129px;top:222px">-</div>
<div class="dc ar red" style="left:902px;width:129px;top:222px">3.421,26</div>
<div class="dc ar " style="left:1032px;width:119px;top:222px">0,00</div>
<div class="dc ar " style="left:1152px;width:119px;top:222px">0,00</div>
<div class="dc ac grn" style="left:1272px;width:119px;top:222px">100.00%</div>
<div class="dc" style="left:1392px;width:130px;top:222px"><span class="badge">Onaylandi</span></div>
<div class="dc ac " style="left:1px;width:80px;top:260px">6</div>
<div class="dc ac " style="left:232px;width:79px;top:260px">2025</div>
<div class="dc ac " style="left:312px;width:99px;top:260px">Aralık</div>
<div class="dc ar " style="left:412px;width:119px;top:260px">12.000,65</div>
<div class="dc ar " style="left:532px;width:119px;top:260px">12.000,65</div>
<div class="dc ar " style="left:652px;width:119px;top:260px">8.579,39</div>
<div class="dc ar " style="left:772px;width:129px;top:260px">-</div>
<div class="dc ar red" style="left:902px;width:129px;top:260px">3.421,26</div>
<div class="dc ar " style="left:1032px;width:119px;top:260px">0,00</div>
<div class="dc ar " style="left:1152px;width:119px;top:260px">0,00</div>
<div class="dc ac grn" style="left:1272px;width:119px;top:260px">100.00%</div>
<div class="dc" style="left:1392px;width:130px;top:260px"><span class="badge">Hesaplandi</span></div>
<div class="dc ac " style="left:1px;width:80px;top:298px">7</div>
<div class="dc ac " style="left:232px;width:79px;top:298px">2025</div>
<div class="dc ac " style="left:312px;width:99px;top:298px">Kasım</div>
<div class="dc ar " style="left:412px;width:119px;top:298px">12.000,65</div>
<div class="dc ar " style="left:532px;width:119px;top:298px">12.000,65</div>
<div class="dc ar " style="left:652px;width:119px;top:298px">8.579,39</div>
<div class="dc ar " style="left:772px;width:129px;top:298px">-</div>
<div class="dc ar red" style="left:902px;width:129px;top:298px">3.421,26</div>
<div class="dc ar " style="left:1032px;width:119px;top:298px">0,00</div>
<div class="dc ar " style="left:1152px;width:119px;top:298px">0,00</div>
<div class="dc ac grn" style="left:1272px;width:119px;top:298px">100.00%</div>
<div class="dc" style="left:1392px;width:130px;top:298px"><span class="badge">Onaylandi</span></div>
<div class="dc ac " style="left:1px;width:80px;top:336px">8</div>
<div class="dc ac " style="left:232px;width:79px;top:336px">2025</div>
<div class="dc ac " style="left:312px;width:99px;top:336px">Aralık</div>
<div class="dc ar " style="left:412px;width:119px;top:336px">15.000,29</div>
<div class="dc ar " style="left:532px;width:119px;top:336px">15.000,29</div>
<div class="dc ar " style="left:652px;width:119px;top:336px">10.723,86</div>
<div class="dc ar " style="left:772px;width:129px;top:336px">-</div>
<div class="dc ar red" style="left:902px;width:129px;top:336px">4.276,43</div>
<div class="dc ar " style="left:1032px;width:119px;top:336px">0,00</div>
<div class="dc ar " style="left:1152px;width:119px;top:336px">0,00</div>
<div class="dc ac grn" style="left:1272px;width:119px;top:336px">100.00%</div>
<div class="dc" style="left:1392px;width:130px;top:336px"><span class="badge">Hesaplandi</span></div>
<div class="dc ac " style="left:1px;width:80px;top:374px">9</div>
<div class="dc ac " style="left:232px;width:79px;top:374px">2025</div>
<div class="dc ac " style="left:312px;width:99px;top:374px">Eylül</div>
<div class="dc ar " style="left:412px;width:119px;top:374px">15.000,29</div>
<div class="dc ar " style="left:532px;width:119px;top:374px">15.000,29</div>
<div class="dc ar " style="left:652px;width:119px;top:374px">10.723,86</div>
<div class="dc ar " style="left:772px;width:129px;top:374px">-</div>
<div class="dc ar red" style="left:902px;width:129px;top:374px">4.276,43</div>
<div class="dc ar " style="left:1032px;width:119px;top:374px">0,00</div>
<div class="dc ar " style="left:1152px;width:119px;top:374px">0,00</div>
<div class="dc ac grn" style="left:1272px;width:119px;top:374px">100.00%</div>
<div class="dc" style="left:1392px;width:130px;top:374px"><span class="badge">Onaylandi</span></div>
<div class="dc ac " style="left:1px;width:80px;top:412px">10</div>
<div class="dc ac " style="left:232px;width:79px;top:412px">2025</div>
<div class="dc ac " style="left:312px;width:99px;top:412px">Kasım</div>
<div class="dc ar " style="left:412px;width:119px;top:412px">15.000,29</div>
<div class="dc ar " style="left:532px;width:119px;top:412px">15.000,29</div>
<div class="dc ar " style="left:652px;width:119px;top:412px">10.723,86</div>
<div class="dc ar " style="left:772px;width:129px;top:412px">-</div>
<div class="dc ar red" style="left:902px;width:129px;top:412px">4.276,43</div>
<div class="dc ar " style="left:1032px;width:119px;top:412px">0,00</div>
<div class="dc ar " style="left:1152px;width:119px;top:412px">0,00</div>
<div class="dc ac grn" style="left:1272px;width:119px;top:412px">100.00%</div>
<div class="dc" style="left:1392px;width:130px;top:412px"><span class="badge">Onaylandi</span></div>
<div class="dc ac " style="left:1px;width:80px;top:450px">11</div>
<div class="dc ac " style="left:232px;width:79px;top:450px">2025</div>
<div class="dc ac " style="left:312px;width:99px;top:450px">Kasım</div>
<div class="dc ar " style="left:412px;width:119px;top:450px">18.000,14</div>
<div class="dc ar " style="left:532px;width:119px;top:450px">18.000,14</div>
<div class="dc ar " style="left:652px;width:119px;top:450px">12.868,48</div>
<div class="dc ar " style="left:772px;width:129px;top:450px">-</div>
<div class="dc ar red" style="left:902px;width:129px;top:450px">5.131,66</div>
<div class="dc ar " style="left:1032px;width:119px;top:450px">0,00</div>
<div class="dc ar " style="left:1152px;width:119px;top:450px">0,00</div>
<div class="dc ac grn" style="left:1272px;width:119px;top:450px">100.00%</div>
<div class="dc" style="left:1392px;width:130px;top:450px"><span class="badge">Iptal Edildi</span></div>
<div style="left:88px;top:117px;width:130px;height:16px;background:#fff;border-radius:8px"></div>
<div style="left:86px;top:189px;width:141px;height:21px;background:#fff;border-radius:10px"></div>
<div style="left:86px;top:270px;width:102px;height:14px;background:#fff;border-radius:7px"></div>
<div style="left:88px;top:344px;width:88px;height:16px;background:#fff;border-radius:8px"></div>
<div style="left:91px;top:421px;width:104px;height:14px;background:#fff;border-radius:7px"></div>
<div style="left:89px;top:82px;width:75px;height:1.2px;background:repeating-linear-gradient(90deg,#666 0 2px,transparent 2px 7px)"></div>
<div style="left:89px;top:167px;width:43px;height:1.2px;background:repeating-linear-gradient(90deg,#666 0 2px,transparent 2px 7px)"></div>
<div style="left:89px;top:203px;width:18px;height:1.5px;background:repeating-linear-gradient(90deg,#666 0 2px,transparent 2px 7px)"></div>
<div style="left:197px;top:196px;width:20px;height:1.2px;background:repeating-linear-gradient(90deg,#666 0 2px,transparent 2px 7px)"></div>
<div style="left:89px;top:242px;width:93px;height:1.2px;background:repeating-linear-gradient(90deg,#666 0 2px,transparent 2px 7px)"></div>
<div style="left:144px;top:359px;width:22px;height:1.2px;background:repeating-linear-gradient(90deg,#666 0 2px,transparent 2px 7px)"></div>
<div style="left:141px;top:474px;width:3px;height:1.2px;background:repeating-linear-gradient(90deg,#666 0 2px,transparent 2px 7px)"></div>
<div style="left:165px;top:460px;width:2px;height:1.2px;background:repeating-linear-gradient(90deg,#666 0 2px,transparent 2px 7px)"></div>
<div style="left:215px;top:120px;width:3px;height:1.2px;background:repeating-linear-gradient(90deg,#666 0 2px,transparent 2px 7px)"></div>
<div style="left:89px;top:424px;width:7px;height:1.5px;background:#444"></div><div style="left:92px;top:424px;width:1.3px;height:9px;background:#444"></div>
</div>
</body></html>
